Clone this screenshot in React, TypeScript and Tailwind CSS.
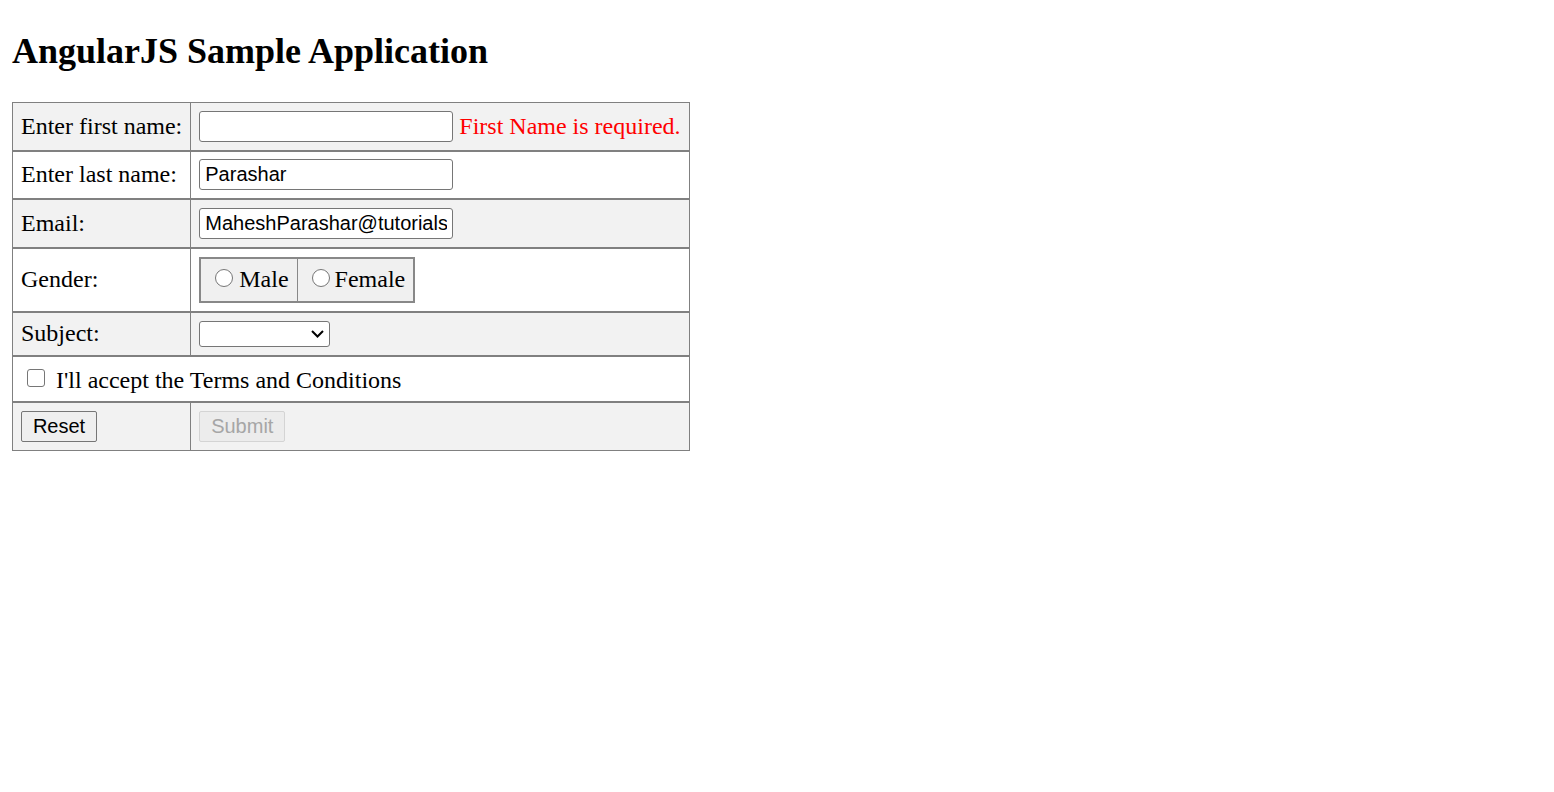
import { useState } from "react"

const serif = "font-['Liberation_Serif','Times_New_Roman',serif]"
const sans = "font-['Liberation_Sans',Arial,sans-serif]"

const cell = "border border-[#808080] px-[8px] align-middle"
const rowLine = "border-t-2 border-t-[#808080]"

const TextBox = ({ value }: { value?: string }) => (
  <input
    type="text"
    defaultValue={value}
    className={`${sans} w-[254px] h-[31px] px-[5px] text-[20px] leading-[23px] text-black bg-white border border-[#767676] rounded-[3px] align-middle outline-none`}
  />
)

const Radio = ({ name }: { name: string }) => (
  <input
    type="radio"
    name={name}
    className="appearance-none w-[18px] h-[18px] rounded-full border border-[#767676] bg-white mb-[5px] shrink-0"
  />
)

const App = () => {
  const [accepted, setAccepted] = useState(false)

  return (
    <div className={`${serif} px-[12px] text-black text-[24px] leading-[1.15]`}>
      <h2 className="text-[36px] font-bold leading-[41px] pt-[31px] pb-[30px]">AngularJS Sample Application</h2>

      <table className="border-collapse border border-[#808080]">
        <tbody>
          {/* first name */}
          <tr className="bg-[#f2f2f2]">
            <td className={`${cell} py-[8px]`}>Enter first name:</td>
            <td className={`${cell} py-[8px] whitespace-nowrap`}>
              <TextBox />
              <span className="text-[#ff0000] ml-[6px] align-middle">First Name is required.</span>
            </td>
          </tr>
          {/* last name */}
          <tr className={`bg-white ${rowLine}`}>
            <td className={`${cell} ${rowLine} pt-[7px] pb-[8px]`}>Enter last name:</td>
            <td className={`${cell} ${rowLine} pt-[7px] pb-[8px]`}>
              <TextBox value="Parashar" />
            </td>
          </tr>
          {/* email */}
          <tr className={`bg-[#f2f2f2] ${rowLine}`}>
            <td className={`${cell} ${rowLine} py-[8px]`}>Email:</td>
            <td className={`${cell} ${rowLine} py-[8px]`}>
              <TextBox value="MaheshParashar@tutorialspoint.com" />
            </td>
          </tr>
          {/* gender */}
          <tr className={`bg-white ${rowLine}`}>
            <td className={`${cell} ${rowLine} py-[8px]`}>Gender:</td>
            <td className={`${cell} ${rowLine} py-[8px]`}>
              <div className="inline-flex h-[46px] border-2 border-[#888888] bg-[#f0f0f0] align-middle">
                <label className="flex items-center gap-[6px] pl-[14px] pr-[8px] border-r border-[#888888]">
                  <Radio name="gender" />
                  <span>Male</span>
                </label>
                <label className="flex items-center gap-[5px] pl-[14px] pr-[8px]">
                  <Radio name="gender" />
                  <span>Female</span>
                </label>
              </div>
            </td>
          </tr>
          {/* subject */}
          <tr className={`bg-[#f2f2f2] ${rowLine}`}>
            <td className={`${cell} ${rowLine} py-[7px]`}>Subject:</td>
            <td className={`${cell} ${rowLine} py-[7px]`}>
              <div className="relative w-[131px] h-[26px]">
                <select className="appearance-none w-full h-full bg-white border border-[#767676] rounded-[3px] outline-none">
                  <option></option>
                </select>
                <svg className="absolute right-[6px] top-[9px] pointer-events-none" width="13" height="8" viewBox="0 0 13 8">
                  <path d="M1 1 L6.5 6.5 L12 1" fill="none" stroke="#000" strokeWidth="2" />
                </svg>
              </div>
            </td>
          </tr>
          {/* terms */}
          <tr className={`bg-white ${rowLine}`}>
            <td colSpan={2} className={`${cell} ${rowLine} pt-[10px] pb-[7px]`}>
              <label className="flex items-center">
                <input
                  type="checkbox"
                  checked={accepted}
                  onChange={() => setAccepted(!accepted)}
                  className="appearance-none w-[18px] h-[18px] ml-[6px] mr-[11px] mb-[4px] rounded-[3px] border border-[#767676] bg-white"
                />
                <span>I'll accept the Terms and Conditions</span>
              </label>
            </td>
          </tr>
          {/* buttons */}
          <tr className={`bg-[#f2f2f2] ${rowLine}`}>
            <td className={`${cell} ${rowLine} py-[8px]`}>
              <button className={`${sans} w-[76px] h-[31px] text-[20px] text-black bg-[#efefef] border border-[#767676] rounded-[2px]`}>Reset</button>
            </td>
            <td className={`${cell} ${rowLine} py-[8px]`}>
              <button
                disabled={!accepted}
                className={`${sans} w-[86px] h-[31px] text-[20px] text-[#a6a6a6] bg-[#ececec] border border-[#d4d4d4] rounded-[2px]`}
              >
                Submit
              </button>
            </td>
          </tr>
        </tbody>
      </table>
    </div>
  )
}

export default App
